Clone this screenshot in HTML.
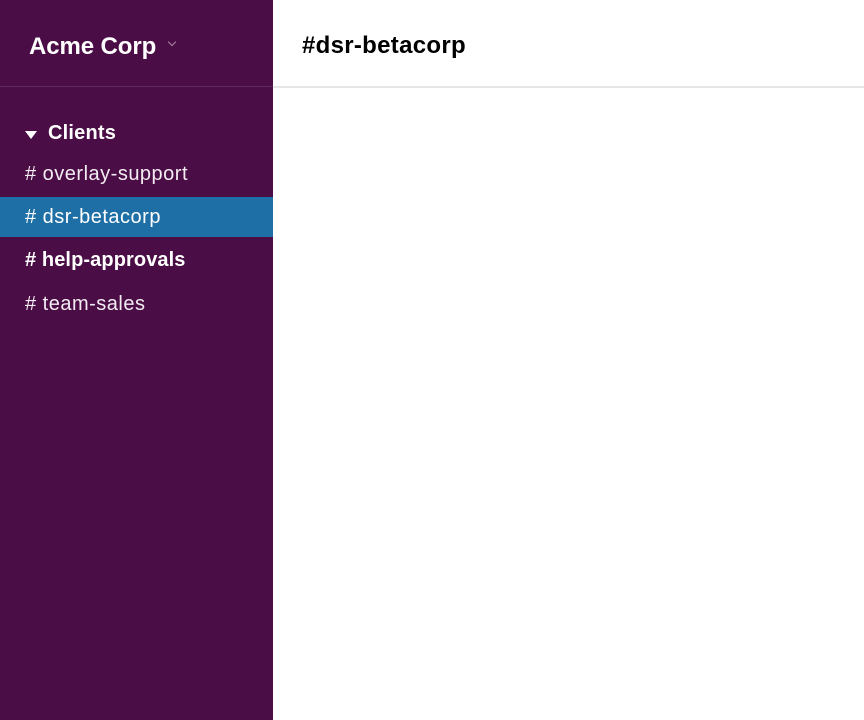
<!DOCTYPE html>
<html><head><style>
body{margin:0;width:864px;height:720px;overflow:hidden;font-family:"Liberation Sans",sans-serif;background:#fff;position:relative}
.sb{position:absolute;left:0;top:0;width:273px;height:720px;background:#4a0d45;color:#fff}
.team{position:absolute;left:29px;top:33px;font-size:24px;font-weight:bold;letter-spacing:-0.1px}
.chev{position:absolute;left:169px;top:39px;width:5px;height:5px;border-right:1.5px solid #a58aa3;border-bottom:1.5px solid #a58aa3;transform:rotate(45deg)}
.div1{position:absolute;left:0;top:86px;width:273px;height:1px;background:#5e2a5a}
.sec{position:absolute;left:48px;top:122px;font-size:20px;font-weight:bold;letter-spacing:0.2px}
.tri{position:absolute;left:25px;top:131px;width:0;height:0;border-left:6px solid transparent;border-right:6px solid transparent;border-top:8px solid #fff}
.ch{position:absolute;left:25px;font-size:20px;letter-spacing:0.5px;color:#f3ecf2}
.sel{position:absolute;left:0;top:197px;width:273px;height:40px;background:#1d6fa5}
.hdr{position:absolute;left:302px;top:32px;font-size:24px;font-weight:bold;color:#000;letter-spacing:0.3px}
.div2{position:absolute;left:273px;top:86px;width:591px;height:2px;background:#e6e6e6}
</style></head><body>
<div class="sb">
<div class="team">Acme Corp</div><div class="chev"></div>
<div class="div1"></div>
<div class="tri"></div><div class="sec">Clients</div>
<div class="ch" style="top:163px"># overlay-support</div>
<div class="sel"></div>
<div class="ch" style="top:206px;color:#fff"># dsr-betacorp</div>
<div class="ch" style="top:249px;font-weight:bold;color:#fff;letter-spacing:0.1px"># help-approvals</div>
<div class="ch" style="top:293px"># team-sales</div>
</div>
<div class="hdr">#dsr-betacorp</div>
<div class="div2"></div>
</body></html>
